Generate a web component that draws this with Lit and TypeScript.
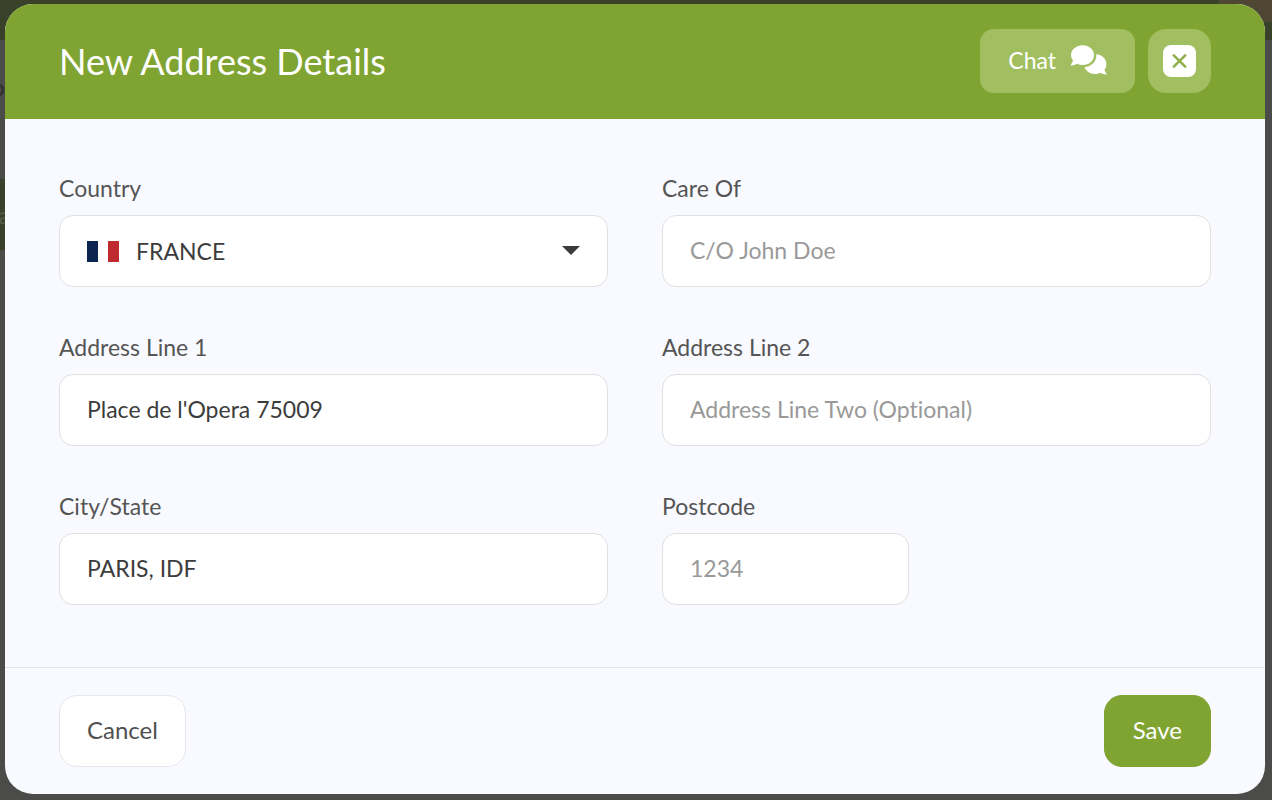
import { LitElement, html, css } from "lit";
import { customElement } from "lit/decorators.js";

@customElement("app-root")
export class AppRoot extends LitElement {
  static styles = css`
    :host {
      display: block;
      font-family: Lato, "Liberation Sans", sans-serif;
      font-size: 23px;
      line-height: 28px;
      font-variant-ligatures: none;
      color: #3c3c3c;
    }
    * {
      box-sizing: border-box;
    }
    .page {
      position: relative;
      min-height: 100vh;
      overflow: hidden;
      background: #4b4c4a;
      padding: 4px 7px 6px 5px;
      display: flex;
    }
    .behind {
      position: absolute;
      inset: 0;
    }
    .bar {
      height: 40px;
      background: #3a412b;
      display: flex;
      justify-content: flex-end;
    }
    .tag {
      width: 53px;
      height: 22px;
      background: #4f4633;
    }
    .strip,
    .block {
      display: flex;
      align-items: center;
      justify-content: flex-end;
    }
    .strip {
      width: 5px;
      height: 139px;
      padding-bottom: 46px;
      font-weight: 700;
      color: #333;
    }
    .block {
      width: 10px;
      height: 71px;
      background: #3a412b;
      color: #585d4b;
    }
    .dialog {
      position: relative;
      flex: 1;
      display: flex;
      flex-direction: column;
      border-radius: 28px;
      overflow: hidden;
      background: #f9faff;
    }
    .head {
      display: flex;
      align-items: center;
      gap: 13px;
      padding: 25px 54px 26px;
      background: #80a432;
      color: #fff;
    }
    h1 {
      flex: 1;
      margin: 0;
      font-size: 36px;
      line-height: 44px;
      font-weight: 400;
    }
    button {
      font: inherit;
      border: 0;
      cursor: pointer;
      display: flex;
      align-items: center;
      justify-content: center;
    }
    .chat,
    .close {
      height: 64px;
      background: #a1be60;
      color: #fff;
    }
    .chat {
      gap: 14px;
      padding: 0 28px 2px;
      border-radius: 14px;
    }
    .close {
      width: 63px;
      padding: 0;
      border-radius: 18px;
    }
    svg {
      display: block;
      flex: none;
    }
    .body {
      flex: 1;
      display: grid;
      grid-template-columns: 1fr 1fr;
      align-content: start;
      gap: 46px 54px;
      padding: 55px 54px 62px;
    }
    .field {
      display: flex;
      flex-direction: column;
      gap: 13px;
    }
    label {
      color: #555;
    }
    .box {
      display: flex;
      align-items: center;
      width: 100%;
      height: 72px;
      padding: 0 27px 2px;
      border: 1px solid #e0e0e3;
      border-radius: 14px;
      background: #fff;
      font: inherit;
      color: inherit;
      outline: 0;
    }
    .short {
      width: 45%;
    }
    .box::placeholder {
      color: #999;
      opacity: 1;
    }
    .picker {
      gap: 17px;
      padding-bottom: 0;
    }
    select {
      flex: 1;
      align-self: stretch;
      appearance: none;
      border: 0;
      padding: 0;
      background: transparent;
      font: inherit;
      color: inherit;
      outline: 0;
    }
    .foot {
      display: flex;
      justify-content: space-between;
      padding: 27px 54px;
      border-top: 1px solid #e4e5ea;
    }
    .action {
      height: 72px;
      padding: 0 28px 2px;
      border: 1px solid #80a432;
      border-radius: 18px;
      font-size: 24px;
    }
    .cancel {
      padding: 0 27px 2px;
      border-color: #e6e6ec;
      background: #fff;
      color: #505050;
    }
    .save {
      background: #80a432;
      color: #fff;
    }
  `;

  render() {
    return html`
      <div class="page">
        <div class="behind" aria-hidden="true">
          <div class="bar"><div class="tag"></div></div>
          <div class="strip">o</div>
          <div class="block">ta</div>
        </div>
        <form class="dialog" role="dialog" aria-labelledby="title" @submit=${(e: Event) => e.preventDefault()}>
          <header class="head">
            <h1 id="title">New Address Details</h1>
            <button class="chat" type="button">
              Chat
              <svg width="37" height="30" viewBox="0 0 37 30" fill="#fff" aria-hidden="true">
                <path d="M12.7 0.3C19.2 0.3 24 4.7 24 10.2S19.2 20 12.7 20C10.7 20 8.8 19.6 7.2 18.8C5.4 19.9 3.4 20.4 1.4 20.4C0.8 20.4 0.6 19.8 1 19.4C2.1 18.1 2.8 16.7 3.1 15.3C1.8 13.9 1 12.1 1 10.2C1 4.7 6.2 0.3 12.7 0.3Z" />
                <path d="M25.8 9.2C31.9 9.2 36.4 13.7 36.4 19.2C36.4 21.2 35.7 23.1 34.5 24.6C34.8 26 35.5 27.2 36.5 28.4C36.9 28.9 36.6 29.5 36 29.5C34 29.4 32 28.9 30.4 27.8C28.8 28.6 27 29 25.1 29C20.3 29 16.2 26.4 14.5 22.3C21.3 21.5 26.3 16.7 26.3 10.8C26.3 10.2 26.1 9.7 25.8 9.2Z" />
              </svg>
            </button>
            <button class="close" type="button" aria-label="Close">
              <svg width="33" height="32" viewBox="0 0 33 32" aria-hidden="true">
                <rect width="33" height="32" rx="8" fill="#fff" />
                <path d="M10.8 10.3L22.2 21.7M22.2 10.3L10.8 21.7" stroke="#8fb04a" stroke-width="2.6" stroke-linecap="round" />
              </svg>
            </button>
          </header>
          <div class="body">
            <div class="field">
              <label for="country">Country</label>
              <div class="box picker">
                <svg width="32" height="21" viewBox="0 0 32 21" aria-hidden="true">
                  <path d="M0 0H11V21H0Z" fill="#0a2550" />
                  <path d="M11 0H21V21H11Z" fill="#fff" />
                  <path d="M21 0H32V21H21Z" fill="#be2a2e" />
                </svg>
                <select id="country">
                  <option>FRANCE</option>
                </select>
                <svg width="18" height="10" viewBox="0 0 18 10" aria-hidden="true">
                  <path d="M0 0H18L9 9Z" fill="#3c3c3c" />
                </svg>
              </div>
            </div>
            <div class="field">
              <label for="care">Care Of</label>
              <input class="box" id="care" placeholder="C/O John Doe" />
            </div>
            <div class="field">
              <label for="line1">Address Line 1</label>
              <input class="box" id="line1" value="Place de l'Opera 75009" />
            </div>
            <div class="field">
              <label for="line2">Address Line 2</label>
              <input class="box" id="line2" placeholder="Address Line Two (Optional)" />
            </div>
            <div class="field">
              <label for="city">City/State</label>
              <input class="box" id="city" value="PARIS, IDF" />
            </div>
            <div class="field">
              <label for="postcode">Postcode</label>
              <input class="box short" id="postcode" placeholder="1234" />
            </div>
          </div>
          <footer class="foot">
            <button class="action cancel" type="button">Cancel</button>
            <button class="action save" type="submit">Save</button>
          </footer>
        </form>
      </div>
    `;
  }
}
